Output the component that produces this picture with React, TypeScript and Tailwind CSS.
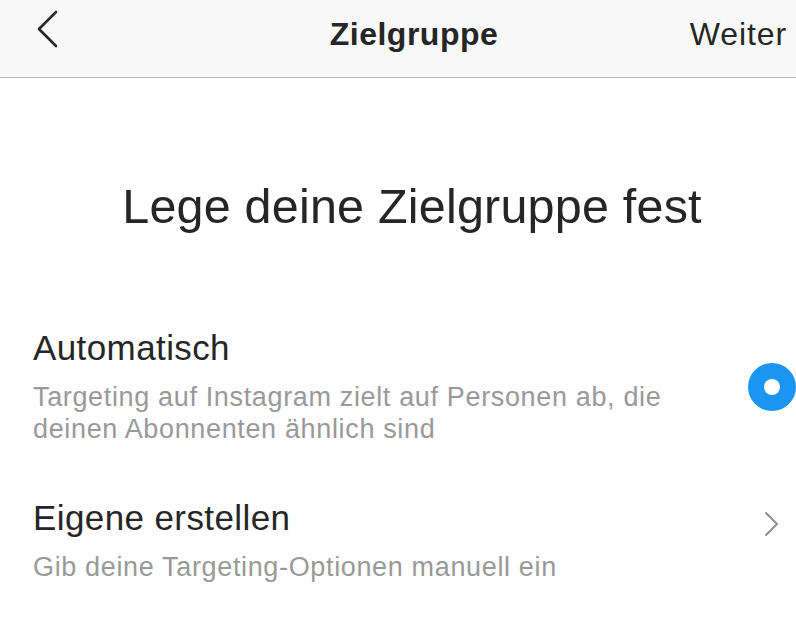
import React from "react";

const font = { fontFamily: '"Liberation Sans", Arial, Helvetica, sans-serif' };

function BackIcon() {
  return (
    <svg width="24" height="40" viewBox="0 0 24 40" fill="none">
      <path d="M20 3 L3 20 L20 37" stroke="#262626" strokeWidth="2.6" strokeLinecap="round" strokeLinejoin="round" />
    </svg>
  );
}

function ChevronRight() {
  return (
    <svg width="16" height="28" viewBox="0 0 16 28" fill="none">
      <path d="M3 3 L14 14 L3 25" stroke="#8e8e8e" strokeWidth="2" strokeLinecap="round" strokeLinejoin="round" />
    </svg>
  );
}

function Radio() {
  return (
    <div className="w-[48px] h-[48px] rounded-full bg-[#1b95f2] flex items-center justify-center shrink-0">
      <div className="w-[16px] h-[16px] rounded-full bg-white" />
    </div>
  );
}

export default function App() {
  return (
    <div className="w-[796px] h-[619px] bg-white overflow-hidden text-[#262626]" style={font}>
      {/* navigation bar */}
      <header className="h-[78px] bg-[#f8f8f8] border-b border-[#b5b5b5] grid grid-cols-[1fr_auto_1fr] items-center pb-[9px]">
        <div className="pl-[36px] flex items-center mb-[10px]">
          <BackIcon />
        </div>
        <div className="pl-[32px] text-[32px] font-bold tracking-[0.5px] leading-none">Zielgruppe</div>
        <div className="flex justify-end pr-[9px]">
          <span className="text-[32px] leading-none tracking-[0.9px]">Weiter</span>
        </div>
      </header>

      <h1 className="mt-[103px] pl-[28px] text-center text-[48.5px] leading-[50px] tracking-[0.2px] font-normal">
        Lege deine Zielgruppe fest
      </h1>

      {/* audience options */}
      <div className="mt-[97px] flex items-center justify-between pl-[33px]">
        <div className="w-[690px]">
          <div className="text-[35px] leading-[40px] tracking-[0.4px]">Automatisch</div>
          <div className="mt-[13px] text-[27px] leading-[32px] tracking-[0.65px] text-[#999999]">
            Targeting auf Instagram zielt auf Personen ab, die deinen Abonnenten ähnlich sind
          </div>
        </div>
        <Radio />
      </div>

      <div className="mt-[53px] flex items-start justify-between pl-[33px] pr-[17px]">
        <div>
          <div className="text-[35px] leading-[40px] tracking-[0.4px]">Eigene erstellen</div>
          <div className="mt-[13px] text-[27px] leading-[32px] tracking-[0.65px] text-[#999999]">
            Gib deine Targeting-Optionen manuell ein
          </div>
        </div>
        <div className="mt-[12px]">
          <ChevronRight />
        </div>
      </div>
    </div>
  );
}
